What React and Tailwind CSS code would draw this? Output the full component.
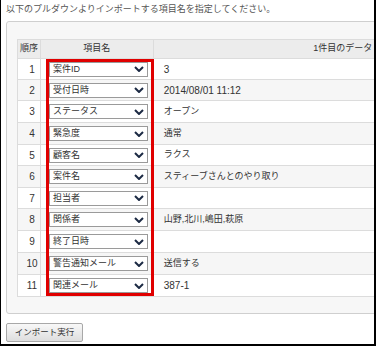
import React from "react";

const rows = [
  { n: "1", item: "案件ID", data: "3", latin: true, h: "h-[21px]" },
  { n: "2", item: "受付日時", data: "2014/08/01 11:12", latin: true, h: "h-[21px]" },
  { n: "3", item: "ステータス", data: "オープン", h: "h-[22px]" },
  { n: "4", item: "緊急度", data: "通常", h: "h-[22px]" },
  { n: "5", item: "顧客名", data: "ラクス", h: "h-[21px]" },
  { n: "6", item: "案件名", data: "スティーブさんとのやり取り", h: "h-[22px]" },
  { n: "7", item: "担当者", data: "", h: "h-[21px]" },
  { n: "8", item: "関係者", data: "山野,北川,嶋田,萩原", h: "h-[22px]" },
  { n: "9", item: "終了日時", data: "", h: "h-[22px]" },
  { n: "10", item: "警告通知メール", data: "送信する", h: "h-[22px]" },
  { n: "11", item: "関連メール", data: "387-1", latin: true, h: "h-[22px]" },
];

function Chevron() {
  return (
    <svg width="10" height="6" viewBox="0 0 10 6" className="shrink-0">
      <path d="M1 1 L5 5 L9 1" fill="none" stroke="#1c2a44" strokeWidth="2" />
    </svg>
  );
}

function Select({ label }) {
  return (
    <div className="w-[99px] h-[15px] bg-white border border-[#9a9a9a] flex items-center justify-between pl-[3px] pr-[3px] text-[9px] leading-none text-[#333]">
      <span>{label}</span>
      <Chevron />
    </div>
  );
}

export default function App() {
  return (
    <div
      className="w-[376px] h-[346px] overflow-hidden bg-white border-l border-r-2 border-b-2 border-black flex flex-col"
      style={{ fontFamily: '"Liberation Sans", "Noto Sans CJK JP", sans-serif' }}
    >
      <div className="h-[21px] pl-[5px] pt-[3px] text-[9px] leading-[12px] text-[#555] whitespace-nowrap">
        以下のプルダウンよりインポートする項目名を指定してください。
      </div>
      <div className="ml-[5px] w-[560px] shrink-0 border border-[#cfcfcf] rounded-l-[3px] bg-[#f7f7f7] pt-[17px] pb-[16px] pl-[10px]">
        <div className="relative w-[515px] border-l border-t border-[#dcdcdc] text-[#333]">
          <div className="flex h-[19px] bg-[#ececec] border-b border-[#dcdcdc] text-[9px]">
            <div className="w-[23px] border-r border-[#dcdcdc] flex items-center justify-center">順序</div>
            <div className="w-[113px] border-r border-[#dcdcdc] flex items-center justify-center">項目名</div>
            <div className="w-[379px] flex items-center justify-center">1件目のデータ</div>
          </div>
          {rows.map((r, i) => (
            <div
              key={r.n}
              className={`flex ${r.h} border-b border-[#dcdcdc] ${i % 2 === 1 ? "bg-[#f6f6f6]" : "bg-white"}`}
            >
              <div className="w-[23px] border-r border-[#dcdcdc] flex items-center justify-center pl-[6px] text-[10px]">
                {r.n}
              </div>
              <div className="w-[113px] border-r border-[#dcdcdc] flex items-center pl-[8px]">
                <Select label={r.item} />
              </div>
              <div className={`w-[379px] flex items-center pl-[10px] ${r.latin ? "text-[10px]" : "text-[9px]"}`}>
                {r.data}
              </div>
            </div>
          ))}
          <div className="absolute left-[28px] top-[19px] w-[108px] h-[237px] border-[3px] border-[#e00000] pointer-events-none" />
        </div>
      </div>
      <div className="pl-[5px] pt-[9px]">
        <button className="w-[77px] h-[19px] border border-[#a8a8a8] rounded-[2px] bg-gradient-to-b from-[#f8f8f8] to-[#dedede] text-[8.5px] text-[#333] flex items-center justify-center">
          インポート実行
        </button>
      </div>
    </div>
  );
}
